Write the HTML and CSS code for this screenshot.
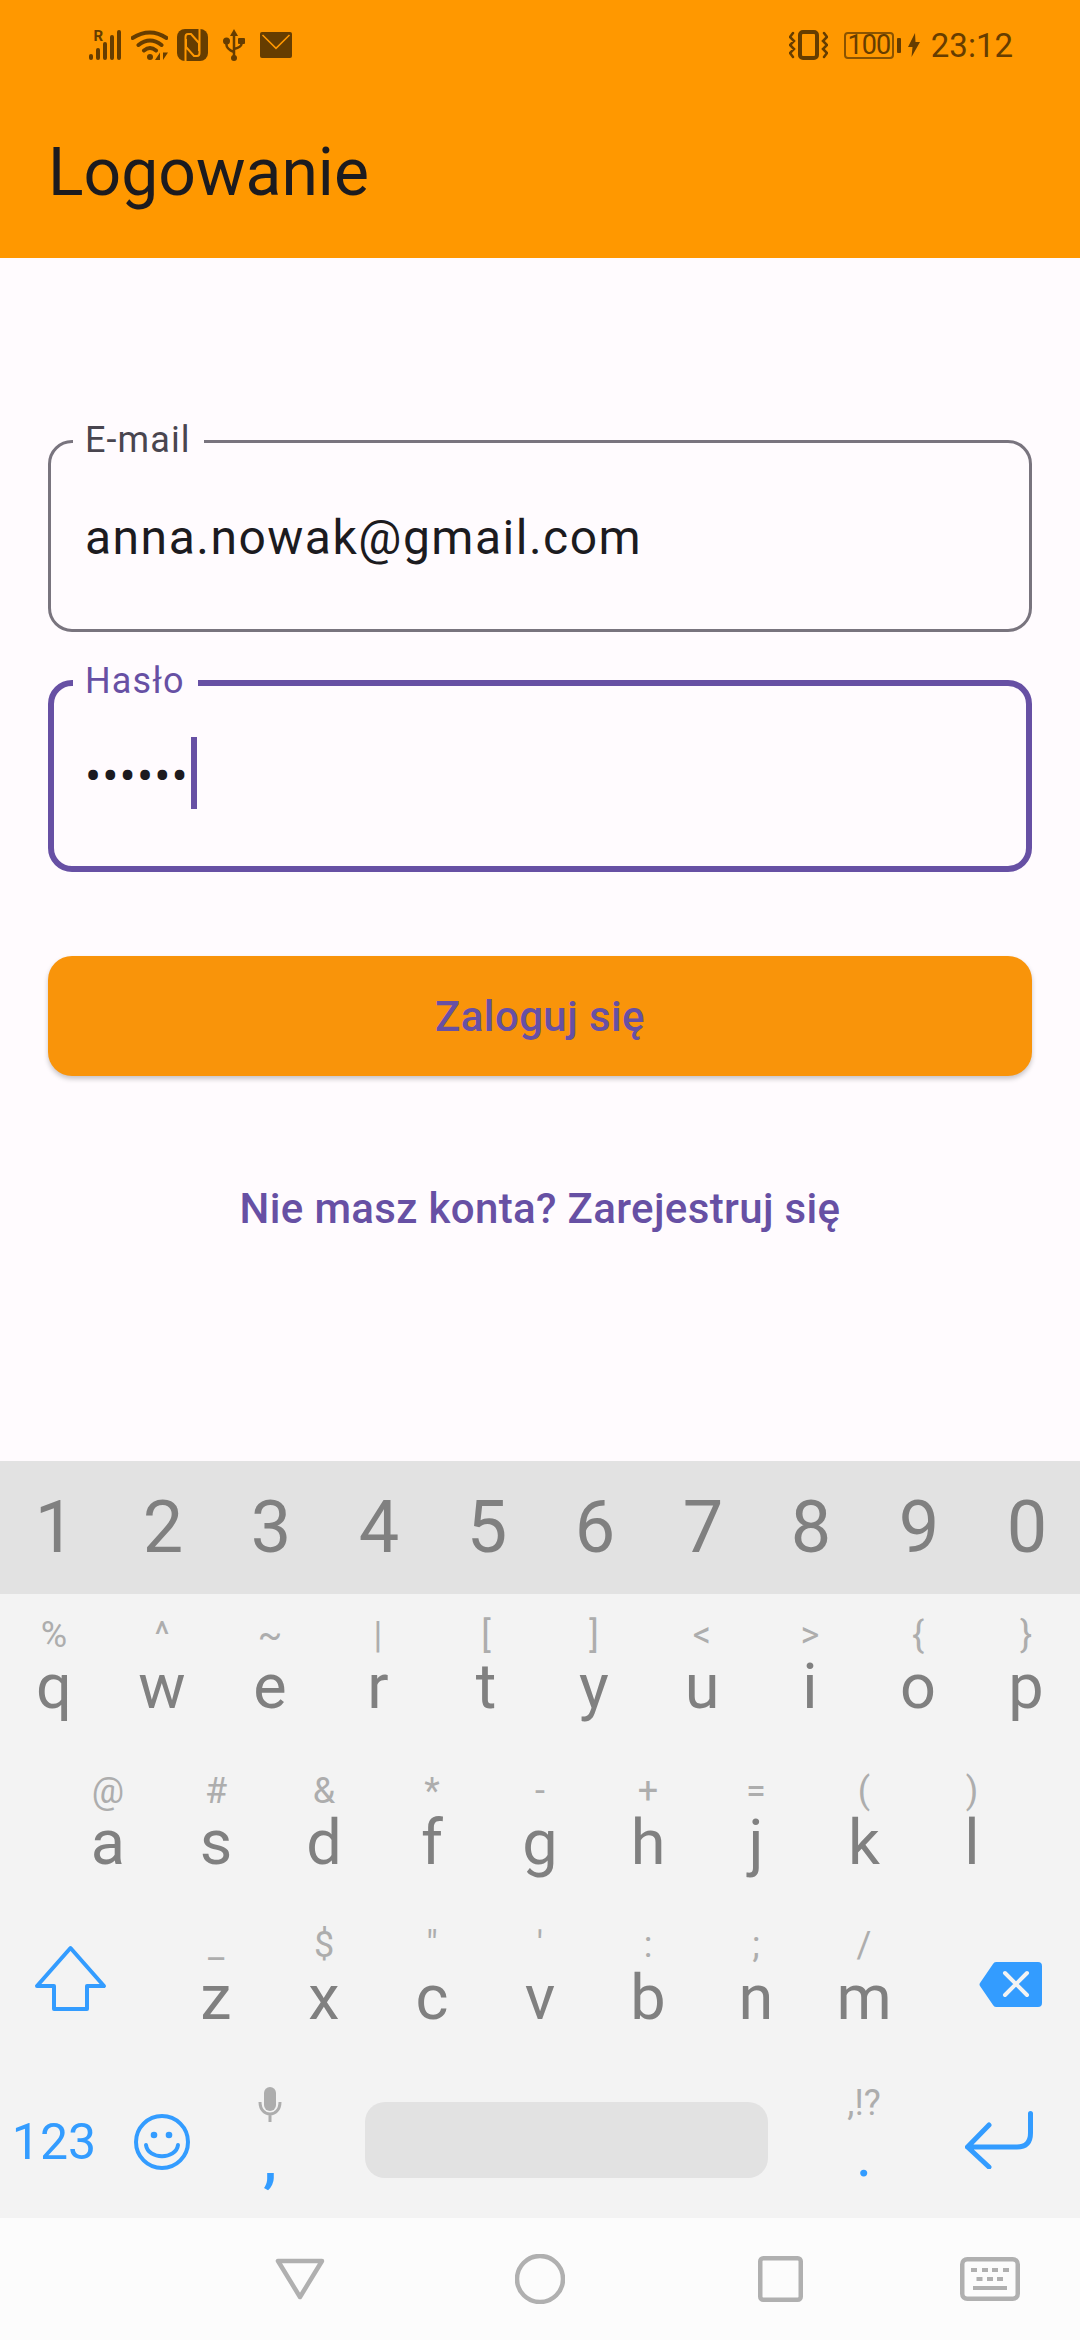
FILE: index.html

```html
<!DOCTYPE html>
<html lang="pl">
<head>
  <meta charset="UTF-8" />
  <meta name="viewport" content="width=device-width, initial-scale=1.0"/>
  <title>Logowanie</title>
  <link rel="stylesheet" href="styles.css">
</head>
<body>
  <header class="top">
    <div class="status">
      <div class="status-left">
        <svg class="signal" width="32" height="30" viewBox="0 0 32 30">
          <text x="4.5" y="11" class="roaming">R</text>
          <rect x="0" y="24" width="4" height="6" rx="2"/>
          <rect x="7" y="18" width="4" height="12" rx="2"/>
          <rect x="14" y="12" width="4" height="18" rx="2"/>
          <rect x="21" y="5" width="4" height="25" rx="2"/>
          <rect x="28" y="0" width="4" height="30" rx="2"/>
        </svg>
        <svg width="37" height="30" viewBox="0 0 37 30">
          <path class="line" d="M1.5 8Q19-3 35.500 8M7.500 15Q19 6 30.500 15M13 20.500Q19 15.500 25 20.500"/>
          <circle cx="19" cy="27" r="3"/>
          <path d="M29 22.500V30H24ZM32 22.500V30L37 22.500Z"/>
        </svg>
        <svg width="31" height="32" viewBox="0 0 31 32">
          <rect width="31" height="32" rx="8"/>
          <path class="cut wide" d="M8.500 32V8Q8.500 5 11 5H14L22 14V22M22.500 0V24Q22.500 27 20 27H17L9 18V10"/>
        </svg>
        <svg class="usb" width="22" height="32" viewBox="0 0 22 32">
          <path d="M11 0L15 7H7Z"/>
          <circle cx="11" cy="29" r="3"/>
          <circle cx="3.500" cy="12" r="3.500"/>
          <rect x="15" y="9" width="7" height="6" rx="1"/>
          <path class="line thin" d="M11 5V28M3.500 14V16Q3.500 20 11 23M18.500 14V15Q18.500 18 11 20"/>
        </svg>
        <svg class="usb" width="32" height="26" viewBox="0 0 32 26">
          <rect width="32" height="26" rx="2"/>
          <path class="cut" d="M2.500 3L16 16.300L29.500 3"/>
        </svg>
      </div>
      <div class="status-right">
        <svg width="39" height="30" viewBox="0 0 39 30">
          <rect x="11" y="2" width="17" height="26" rx="3" class="line"/>
          <path class="line thin" d="M4 3L1 7L5 11L1 15L5 19L1 23L4 27M35 3L38 7L34 11L38 15L34 19L38 23L35 27"/>
        </svg>
        <div class="battery">100</div>
        <div class="battery-nub"></div>
        <svg class="bolt" width="12" height="24" viewBox="0 0 12 24"><path d="M7 0L0 14H4.500L3.500 24L12 9H7.500Z"/></svg>
        <span class="clock">23:12</span>
      </div>
    </div>
    <h1 class="title">Logowanie</h1>
  </header>

  <main class="content">
    <div class="field">
      <span class="field-label">E-mail</span>
      <span class="field-value">anna.nowak@gmail.com</span>
    </div>
    <div class="field active">
      <span class="field-label">Hasło</span>
      <span class="field-value dots">••••••</span>
      <span class="caret"></span>
    </div>
    <button class="login">Zaloguj się</button>
    <a class="register" href="#">Nie masz konta? Zarejestruj się</a>
  </main>

  <section class="keyboard">
    <div class="digits">
      <span>1</span><span>2</span><span>3</span><span>4</span><span>5</span>
      <span>6</span><span>7</span><span>8</span><span>9</span><span>0</span>
    </div>
    <div class="row row-q">
      <div class="key"><i>%</i><b>q</b></div>
      <div class="key"><i>^</i><b>w</b></div>
      <div class="key"><i>~</i><b>e</b></div>
      <div class="key"><i>|</i><b>r</b></div>
      <div class="key"><i>[</i><b>t</b></div>
      <div class="key"><i>]</i><b>y</b></div>
      <div class="key"><i>&lt;</i><b>u</b></div>
      <div class="key"><i>&gt;</i><b>i</b></div>
      <div class="key"><i>{</i><b>o</b></div>
      <div class="key"><i>}</i><b>p</b></div>
    </div>
    <div class="row row-a">
      <div class="key"><i>@</i><b>a</b></div>
      <div class="key"><i>#</i><b>s</b></div>
      <div class="key"><i>&amp;</i><b>d</b></div>
      <div class="key"><i>*</i><b>f</b></div>
      <div class="key"><i>-</i><b>g</b></div>
      <div class="key"><i>+</i><b>h</b></div>
      <div class="key"><i>=</i><b>j</b></div>
      <div class="key"><i>(</i><b>k</b></div>
      <div class="key"><i>)</i><b>l</b></div>
    </div>
    <div class="row row-z">
      <div class="side shift">
        <svg width="75" height="66" viewBox="0 0 75 66"><path class="blue-line" d="M37.500 3L71 41H54V64H21V41H4Z"/></svg>
      </div>
      <div class="key"><i>_</i><b>z</b></div>
      <div class="key"><i>$</i><b>x</b></div>
      <div class="key"><i>"</i><b>c</b></div>
      <div class="key"><i>'</i><b>v</b></div>
      <div class="key"><i>:</i><b>b</b></div>
      <div class="key"><i>;</i><b>n</b></div>
      <div class="key"><i>/</i><b>m</b></div>
      <div class="side backspace">
        <svg width="63" height="45" viewBox="0 0 63 45">
          <path class="blue-fill" d="M17 0H59Q63 0 63 4V41Q63 45 59 45H17Q15 45 14 43L1 24Q0 22.500 1 21L14 2Q15 0 17 0Z"/>
          <path class="x-mark" d="M26 11L48 33M48 11L26 33"/>
        </svg>
      </div>
    </div>
    <div class="row row-bottom">
      <div class="side num">123</div>
      <div class="side smile">
        <svg width="56" height="56" viewBox="0 0 56 56">
          <circle class="blue-line" cx="28" cy="28" r="26"/>
          <circle class="blue-fill" cx="20" cy="21" r="3.300"/>
          <circle class="blue-fill" cx="35" cy="21" r="3.300"/>
          <path class="blue-line" d="M12 31C14 46 42 46 44 31"/>
        </svg>
      </div>
      <div class="key comma">
        <svg width="24" height="35" viewBox="0 0 24 35">
          <rect class="gray-fill" x="6" y="0" width="12" height="24" rx="6"/>
          <path class="gray-line" d="M2 15C2 31 22 31 22 15M12 27V35"/>
        </svg>
        <b>,</b>
      </div>
      <div class="space-cell"><div class="space"></div></div>
      <div class="key period"><i>,!?</i><b>.</b></div>
      <div class="side">
        <svg width="68" height="58" viewBox="0 0 68 58"><path class="blue-line enter" d="M24 14L2.500 36L24 56M2.500 36H52Q65.500 36 65.500 22V2.500"/></svg>
      </div>
    </div>
  </section>

  <nav class="navbar">
    <svg width="50" height="42" viewBox="0 0 50 42"><path d="M3 3H47L25 39Z"/></svg>
    <svg width="50" height="50" viewBox="0 0 50 50"><circle cx="25" cy="25" r="23"/></svg>
    <svg width="45" height="46" viewBox="0 0 45 46"><rect x="2.250" y="2.250" width="40.500" height="41.500" rx="3"/></svg>
    <svg width="60" height="44" viewBox="0 0 60 44">
      <rect x="2.250" y="2.250" width="55.500" height="39.500" rx="5"/>
      <path class="kb-keys" d="M11 11h6v4h-6zM22 11h6v4h-6zM32 11h6v4h-6zM43 11h6v4h-6zM16.500 20h6v4h-6zM27 20h6v4h-6zM37 20h6v4h-6zM13 29h34v4H13z"/>
    </svg>
  </nav>
</body>
</html>
```

FILE: styles.css

```css
* {
  box-sizing: border-box;
}
body {
  margin: 0;
  width: 1080px;
  height: 2340px;
  display: flex;
  flex-direction: column;
  font-family: Roboto, "Liberation Sans", sans-serif;
  background: #fffbfe;
  overflow: hidden;
}

/* top bar */
.top {
  height: 258px;
  background: #ff9800;
}
.status {
  height: 90px;
  padding: 0 67px 0 89px;
  display: flex;
  justify-content: space-between;
  align-items: center;
  color: #663d00;
}
.status svg {
  fill: #663d00;
  display: block;
}
.status .signal {
  overflow: visible;
}
.status-left, .status-right {
  display: flex;
  align-items: center;
}
.status-left {
  gap: 9.5px;
}
.status-left .usb {
  margin-left: 5.5px;
}
.roaming {
  font-size: 15px;
  font-weight: 700;
}
.line {
  fill: none;
  stroke: #663d00;
  stroke-width: 4;
  stroke-linecap: round;
}
.line.thin {
  stroke-width: 2.5;
}
.cut {
  fill: none;
  stroke: #ff9800;
  stroke-width: 1.6;
}
.cut.wide {
  stroke-width: 2;
}
.battery {
  margin-left: 16px;
  width: 50px;
  height: 27px;
  border: 2px solid #8a5300;
  border-radius: 4px;
  font-size: 27px;
  line-height: 23px;
  letter-spacing: -1px;
  text-align: center;
}
.battery-nub {
  margin-left: 3px;
  width: 4px;
  height: 15px;
  border-radius: 1px;
  background: #663d00;
}
.bolt {
  margin-left: 7px;
}
.clock {
  margin-left: 11px;
  font-size: 33px;
}
.title {
  margin: 0;
  height: 168px;
  padding: 0 0 4px 48px;
  display: flex;
  align-items: center;
  font-size: 66px;
  font-weight: 400;
  color: #1c1b1f;
}

/* form */
.content {
  flex: 1;
  padding: 182px 48px 0;
  display: flex;
  flex-direction: column;
}
.field {
  position: relative;
  height: 192px;
  margin-bottom: 48px;
  padding: 2px 0 0 34px;
  display: flex;
  align-items: center;
  border: 3px solid #79747e;
  border-radius: 24px;
}
.field.active {
  padding: 0 0 0 31px;
  margin-bottom: 84px;
  border: 6px solid #6750a4;
}
.field-label {
  position: absolute;
  left: 22px;
  top: -23px;
  padding: 0 13px 0 12px;
  font-size: 36px;
  line-height: 40px;
  letter-spacing: 1.1px;
  background: #fffbfe;
  color: #49454f;
}
.active .field-label {
  left: 19px;
  top: -25px;
  color: #6750a4;
}
.field-value {
  font-size: 48px;
  letter-spacing: 1.5px;
  color: #1c1b1f;
}
.field-value.dots {
  letter-spacing: 1.1px;
}
.caret {
  width: 6px;
  height: 72px;
  margin: -6px 0 0 2px;
  background: #6750a4;
}
.login {
  height: 120px;
  border: none;
  border-radius: 24px;
  background: #f9940a;
  box-shadow: 0 3px 5px rgba(0, 0, 0, 0.22);
  font-family: inherit;
  font-size: 42px;
  font-weight: 500;
  letter-spacing: 0.4px;
  color: #6750a4;
}
.register {
  margin-top: 103px;
  font-size: 42px;
  line-height: 60px;
  font-weight: 500;
  letter-spacing: 0.35px;
  text-align: center;
  text-decoration: none;
  color: #6750a4;
}

/* keyboard */
.keyboard {
  height: 757px;
  background: #f3f3f3;
}
.digits {
  height: 133px;
  padding-left: 1px;
  display: grid;
  grid-template-columns: repeat(10, 108px);
  align-items: center;
  background: #e2e2e2;
  font-size: 72px;
  text-align: center;
  color: #808080;
}
.row {
  height: 156px;
  display: grid;
  grid-template-columns: repeat(10, 108px);
}
.row-a {
  padding-left: 54px;
  grid-template-columns: repeat(9, 108px);
}
.row-z {
  grid-template-columns: 162px repeat(7, 108px) 162px;
}
.row-bottom {
  grid-template-columns: 108px 108px 108px 486px 108px 162px;
}
.key {
  padding-top: 21px;
  display: flex;
  flex-direction: column;
  align-items: center;
}
.key i {
  font-style: normal;
  font-size: 36px;
  line-height: 40px;
  color: #adadad;
}
.key b {
  font-weight: 400;
  font-size: 63px;
  line-height: 64px;
  color: #808080;
}
.row-z .key {
  padding-top: 19px;
}
.row-z .key i {
  line-height: 41px;
}
.side {
  display: flex;
  align-items: center;
  justify-content: center;
}
.shift {
  padding: 0 21px 12px 0;
}
.backspace {
  padding-left: 22px;
}
.num {
  padding-top: 3px;
  font-size: 50px;
  color: #339cff;
}
.smile {
  padding-top: 3px;
}
.blue-line {
  fill: none;
  stroke: #339cff;
  stroke-width: 4;
  stroke-linecap: round;
  stroke-linejoin: round;
}
.blue-line.enter {
  stroke-width: 5;
}
.blue-fill {
  fill: #339cff;
}
.x-mark {
  fill: none;
  stroke: #f3f3f3;
  stroke-width: 4;
  stroke-linecap: round;
}
.gray-fill {
  fill: #adadad;
}
.gray-line {
  fill: none;
  stroke: #adadad;
  stroke-width: 3;
}
.comma {
  padding-top: 25px;
}
.comma b, .period b {
  color: #339cff;
}
.comma b {
  margin-top: 5px;
  font-weight: 500;
}
.space-cell {
  padding: 40px 42px 40px 41px;
}
.space {
  height: 76px;
  border-radius: 20px;
  background: #e2e2e2;
}

/* nav bar */
.navbar {
  height: 122px;
  padding-left: 180px;
  display: grid;
  grid-template-columns: 240px 240px 240px 180px;
  justify-items: center;
  align-items: center;
  background: #fcfcfc;
}
.navbar svg {
  fill: none;
  stroke: #b0b0b0;
  stroke-width: 4.5;
  stroke-linejoin: round;
}
.navbar .kb-keys {
  fill: #b0b0b0;
  stroke: none;
}
```
